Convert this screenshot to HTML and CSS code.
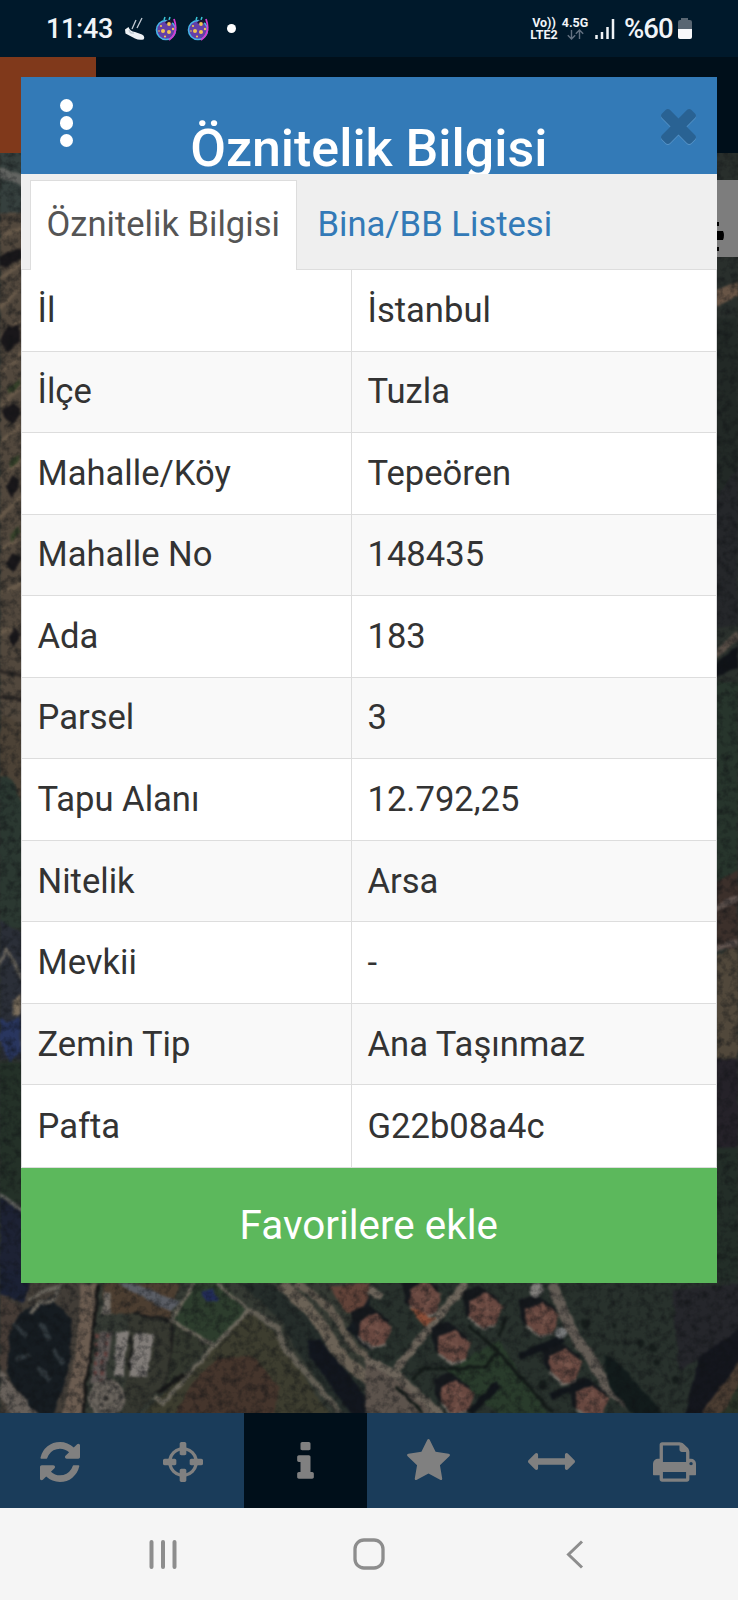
FILE: index.html
```html
<!DOCTYPE html>
<html lang="tr">
<head>
<meta charset="utf-8">
<title>Öznitelik Bilgisi</title>
<link rel="stylesheet" href="styles.css">
</head>
<body>
<div class="phone">
  <header class="status">
    <span class="clock">11:43</span>
    <svg class="shoe" width="21" height="24" viewBox="0 0 21 24"><path d="M1 12.500L4.500 10Q6 14.500 11 15L18 17.500Q21.500 19.500 19.500 22.500Q15 23.500 11 21.500L1.500 16.500Z" fill="#eef1f4"/><path d="M8 12L12 3M13 11L18 1M5 13Q6 17 10 16" stroke="#c3cbd4" stroke-width="1.300" fill="none"/></svg>
    <svg class="bug" width="24" height="28" viewBox="0 0 24 28"><use href="#beetle"/></svg>
    <svg class="bug second" width="24" height="28" viewBox="0 0 24 28"><use href="#beetle"/></svg>
    <i class="dot"></i>
    <span class="net lte"><span>Vo))</span><span>LTE2</span></span>
    <span class="net gen"><span>4.5G</span>
      <svg width="17" height="11" viewBox="0 0 17 11"><path d="M4.500 1V10M.8 6.200L4.500 10L8.200 6.200M12.500 10V1M8.800 4.800L12.500 1L16.200 4.800" fill="none" stroke="#627080" stroke-width="1.400"/></svg></span>
    <svg class="signal" width="20" height="22" viewBox="0 0 20 22"><path d="M1.500 17V21M7 14V21M12.500 9V21M18 1V21" stroke="#f0f3f6" stroke-width="2.500"/></svg>
    <span class="percent">%60</span>
    <svg class="battery" width="16" height="22" viewBox="0 0 16 22"><path d="M4 0H11V2H13Q15 2 15 4V11H1V4Q1 2 3 2H4Z" fill="#596672"/><path d="M1 11H15V19Q15 21 13 21H3Q1 21 1 19Z" fill="#f7f8fa"/></svg>
  </header>

  <main class="stage">
    <div class="appbar"><div class="brand"></div></div>
    <svg class="map" width="738" height="1260" viewBox="0 153 738 1260" preserveAspectRatio="none">
      <defs>
        <g id="beetle">
          <path d="M9 5L10 2M14 5L15 2" stroke="#39c5d8" stroke-width="1.500"/>
          <circle cx="11" cy="15" r="9.500" fill="#6340a8" stroke="#45b5e8" stroke-width="1.600"/>
          <path d="M19 4Q24 18 14 25" fill="none" stroke="#d63bd0" stroke-width="1.800"/>
          <path d="M10 8Q13 2 18 7L15 10Z" fill="#1c1430"/>
          <g fill="#f4c552"><circle cx="14" cy="9" r="1.900"/><circle cx="8" cy="16" r="2"/><circle cx="14" cy="17" r="2"/><circle cx="10" cy="21.500" r="1.100"/><circle cx="6" cy="11" r="1.100"/><circle cx="18" cy="14" r="1.200"/><circle cx="4" cy="16" r=".8"/></g>
        </g>
        <filter id="grain" x="0" y="0" width="100%" height="100%" color-interpolation-filters="sRGB"><feTurbulence type="fractalNoise" baseFrequency=".13" numOctaves="3" seed="8"/><feColorMatrix values="0 0 0 0 .06  0 0 0 0 .07  0 0 0 0 .08  1.200 0 0 0 -.5"/></filter>
        <filter id="rough" x="-5%" y="-5%" width="110%" height="110%" color-interpolation-filters="sRGB"><feTurbulence type="fractalNoise" baseFrequency=".09" numOctaves="2" seed="3" result="n"/><feDisplacementMap in="SourceGraphic" in2="n" scale="5" xChannelSelector="R" yChannelSelector="G"/><feGaussianBlur stdDeviation=".8"/></filter>
        <g id="house"><path d="M-58 -38L-8 -56L54 -12L54 18L10 56L-46 30Z" fill="#15181c" transform="translate(-14 -18)"/><path d="M-48 -26L0 -50L50 -10L30 44L-10 56L-48 18Z" fill="#684840"/><path d="M-48 -26L8 4L50 -10M8 4L-10 54M8 4L0 -48" stroke="#7b584e" stroke-width="5" fill="none"/><path d="M-50 22L-10 56L32 44" stroke="#79736c" stroke-width="6" fill="none"/></g>
      </defs>
      <rect y="153" width="738" height="1260" fill="#2b312d"/>
      <g filter="url(#rough)">
        <!-- west edge -->
        <g transform="translate(0 150) scale(.3333 .7334)">
          <rect width="70" height="90" fill="#36403e"/>
          <path d="M0 24L70 35V50L0 38Z" fill="#626461"/>
          <rect y="85" width="70" height="770" fill="#52483d"/>
          <path d="M0 120L70 104M0 175L70 150M0 215L70 185M0 258L70 230M0 305L70 275M0 350L70 320M0 398L70 375M0 445L70 425M0 500L70 470M0 545L70 525M0 605L70 590M0 660L70 646" stroke="#685a4a" stroke-width="6"/>
          <path d="M0 145L22 139L64 132V148L22 159L0 158ZM0 260L20 240L60 238V260L24 276ZM10 355L40 345L62 353L40 374L10 365ZM16 460L38 443L64 450L40 474ZM20 565L38 548L62 556L40 575ZM26 665L46 650L64 660L40 678Z" fill="#19171a"/>
          <path d="M26 328L60 316M30 430L60 420M30 530L60 515" stroke="#354129" stroke-width="9"/>
          <path d="M0 710L70 718M0 745L70 750" stroke="#2d2825" stroke-width="6"/>
          <path d="M0 770L70 785V910H0Z" fill="#4c4236"/>
          <path d="M0 855Q40 845 70 900V1060H0Z" fill="#2b3831"/>
          <path d="M0 1050L70 1070V1240H0Z" fill="#2b2f38"/>
          <path d="M0 1110L20 1090L64 1130M0 1215L64 1220" stroke="#67635c" stroke-width="8" fill="none"/>
          <path d="M0 1182L22 1190L62 1180V1230L30 1246L0 1215Z" fill="#29365f"/>
          <path d="M38 1160L62 1150V1180H38Z" fill="#7d705e"/>
          <rect y="1245" width="70" height="190" fill="#243128"/>
          <path d="M0 1428L70 1450V1568H0Z" fill="#1d2234"/>
          <path d="M0 1424L70 1447" stroke="#60615e" stroke-width="6"/>
        </g>
        <!-- east edge -->
        <g transform="translate(708 150) scale(.3333 .7334)">
          <rect width="90" height="500" fill="#292f2c"/>
          <path d="M20 192L90 180V197L20 216Z" fill="#685546"/>
          <path d="M20 230H90V480H20Z" fill="#222926"/>
          <path d="M20 480L90 430V650H20Z" fill="#25272a"/>
          <path d="M20 690L90 660" stroke="#5a5048" stroke-width="11"/>
          <path d="M20 702L90 676V705L20 720Z" fill="#101318"/>
          <rect y="725" x="20" width="70" height="270" fill="#27352c"/>
          <path d="M20 1000L90 980V1090H20Z" fill="#3c302b"/>
          <path d="M20 1035L90 1020M20 1090L90 1080" stroke="#625550" stroke-width="8"/>
          <path d="M20 1100L90 1085V1240H20Z" fill="#51483b"/>
          <path d="M20 1240H90V1440H20Z" fill="#252229"/>
          <path d="M20 1360H90V1568H20Z" fill="#232e28"/>
        </g>
        <!-- south-west -->
        <g transform="translate(0 1270) scale(.3333)">
          <rect width="1107" height="440" fill="#353a33"/>
          <path d="M0 0H260L230 440H0Z" fill="#423d37"/>
          <path d="M0 0H100L70 100L0 70Z" fill="#1b2134"/>
          <path d="M0 70L60 110L100 200L30 290L0 310Z" fill="#473d37"/>
          <path d="M60 130L150 80L215 150L210 280L160 440H110L20 310L30 180Z" fill="#161c21"/>
          <path d="M40 160L80 200M120 160L150 210M50 270L90 250M110 290L150 330M160 240L190 280" stroke="#30383d" stroke-width="14"/>
          <path d="M85 90L140 60L180 50L160 90L120 100L90 130" fill="none" stroke="#68645c" stroke-width="12"/>
          <path d="M0 300L120 440H40L0 380Z" fill="#67605a"/>
          <path d="M242 40H300L248 440H186Q238 250 242 40Z" fill="#6b5c50"/>
          <path d="M297 40L248 440" stroke="#141414" stroke-width="8"/>
          <path d="M306 40H540L510 150L400 130L310 130Z" fill="#4c3e31"/>
          <path d="M350 40H400L540 95L515 125Z" fill="#5a5d64"/>
          <path d="M312 65H332V130H306Z" fill="#77716a"/>
          <path d="M390 130L515 150L510 320L400 440H370L380 190Z" fill="#363830"/>
          <path d="M300 185H338L315 340H270Z" fill="#5d5654"/>
          <path d="M350 185H388L368 320H342ZM405 190H462L443 320H388Z" fill="#817c78"/>
          <path d="M395 195L390 300M400 130L510 155M515 150L510 310L480 370" stroke="#1b1b1b" stroke-width="6" fill="none"/>
          <path d="M290 190L285 330M322 190L302 340" stroke="#65403d" stroke-dasharray="12 16" stroke-width="10"/>
          <circle cx="320" cy="385" r="56" fill="#6a645d"/><circle cx="320" cy="385" r="43" fill="none" stroke="#4a4743" stroke-width="5"/><circle cx="320" cy="385" r="24" fill="none" stroke="#4a4743" stroke-width="5"/><circle cx="320" cy="385" r="7" fill="#302e2c"/>
          <path d="M585 40H670L745 120L640 220L520 150Z" fill="#2d3d2d"/>
          <path d="M520 155L635 225L470 380L510 310Z" fill="#33382e"/>
          <path d="M745 125L830 190L990 440H420L640 230Z" fill="#3d3d2f"/>
          <path d="M650 265L760 260L840 350L820 440H520L570 350Z" fill="#45352c"/>
          <path d="M580 40L515 150L640 225M650 40L745 118L640 230L490 400L460 380" stroke="#6b675c" stroke-width="11" fill="none"/>
          <path d="M745 118L835 175L850 230L1020 425" stroke="#69645a" stroke-width="18" fill="none"/>
          <path d="M470 370L555 310" stroke="#171717" stroke-width="14"/>
          <path d="M604 65L640 55L655 90L620 95Z" fill="#222c58"/>
          <path d="M720 40H820L920 130L1000 200L1107 330V440H1040L880 230L850 160Z" fill="#252d2a"/>
          <path d="M745 118L835 175L850 230L1020 425" stroke="#625e54" stroke-width="18" fill="none"/>
          <path d="M920 210L960 210L1107 390V440H1060L930 260Z" fill="#12161e"/>
          <path d="M840 40Q950 130 985 200T1120 340" stroke="#6b6256" stroke-width="36" fill="none"/>
          <path d="M890 40Q1000 110 1030 180T1120 265" stroke="#655d52" stroke-width="22" fill="none"/>
          <path d="M990 50L1107 40V120L1040 130Z" fill="#624339"/>
          <path d="M1107 80L1040 180L1107 240Z" fill="#151b20"/>
        </g>
        <!-- south-east housing -->
        <g transform="translate(369 1270) scale(.3333)">
          <rect y="30" width="1120" height="410" fill="#28312c"/>
          <path d="M390 210L540 440H400L230 300Z" fill="#293b2b"/>
          <path d="M-10 260L75 300L210 440H-10Z" fill="#5c534c"/>
          <path d="M290 40L80 300M-10 265L90 320L220 440M0 60L40 80" stroke="#6c645a" stroke-width="24" fill="none"/>
          <path d="M550 40Q600 180 640 230T710 350L840 440" stroke="#635c55" stroke-width="32" fill="none"/>
          <path d="M300 170L385 240L350 290L150 300M385 240L550 430M80 350L160 430M390 200L410 140M170 290L130 330" stroke="#141b18" stroke-width="10" fill="none"/>
          <use href="#house" x="170" y="85"/><use href="#house" x="350" y="120"/><use href="#house" x="520" y="145"/>
          <use href="#house" x="258" y="228"/><use href="#house" x="590" y="285"/><use href="#house" x="265" y="380"/>
          <use href="#house" x="670" y="395"/><use href="#house" x="20" y="180"/>
          <path d="M120 110L200 145L165 170Z" fill="#8a4e38"/>
          <path d="M450 260L580 205M545 380L665 335M300 430L390 340" stroke="#11151a" stroke-width="22"/>
          <circle cx="503" cy="60" r="21" fill="#817e7b"/><circle cx="576" cy="188" r="19" fill="#77797a"/>
          <path d="M700 250L760 290L890 440H800L720 350Z" fill="#121b1b"/>
          <path d="M910 60L1120 40V190L1000 260L930 300Z" fill="#25262b"/>
          <path d="M1120 170L990 260L945 440H1000L1120 290Z" fill="#14161d"/>
          <path d="M1120 260L990 440H1060L1120 350Z" fill="#4b3d32"/>
          <path d="M1120 330L1050 440H1120Z" fill="#293327"/>
          <g fill="#161d1b"><circle cx="815" cy="220" r="11"/><circle cx="850" cy="235" r="12"/><circle cx="918" cy="330" r="13"/><circle cx="650" cy="160" r="12"/><circle cx="738" cy="168" r="7"/><circle cx="865" cy="280" r="9"/><circle cx="520" cy="345" r="14"/></g>
        </g>
      </g>
      <rect y="153" width="738" height="1260" filter="url(#grain)"/>
      <rect x="690" y="180" width="48" height="77" fill="#7d7d7d"/>
      <path d="M717 222H719V226H717ZM717 231L723 231Q725 235 723 240H717ZM717 247H719V251H717Z" fill="#000"/>
    </svg>

    <section class="modal">
      <div class="modal-head">
        <div class="kebab"><i></i><i></i><i></i></div>
        <h1>Öznitelik Bilgisi</h1>
        <svg class="close" width="35" height="35" viewBox="110 366 1188 1188"><path d="M1298 1322q0 40-28 68l-136 136q-28 28-68 28t-68-28l-294-294-294 294q-28 28-68 28t-68-28l-136-136q-28-28-28-68t28-68l294-294-294-294q-28-28-28-68t28-68l136-136q28-28 68-28t68 28l294 294 294-294q28-28 68-28t68 28l136 136q28 28 28 68t-28 68l-294 294 294 294q28 28 28 68z"/></svg>
      </div>
      <nav class="tabs"><a class="tab active">Öznitelik Bilgisi</a><a class="tab">Bina/BB Listesi</a></nav>
      <dl class="rows">
        <div class="row"><dt>İl</dt><dd>İstanbul</dd></div>
        <div class="row"><dt>İlçe</dt><dd>Tuzla</dd></div>
        <div class="row"><dt>Mahalle/Köy</dt><dd>Tepeören</dd></div>
        <div class="row"><dt>Mahalle No</dt><dd>148435</dd></div>
        <div class="row"><dt>Ada</dt><dd>183</dd></div>
        <div class="row"><dt>Parsel</dt><dd>3</dd></div>
        <div class="row"><dt>Tapu Alanı</dt><dd>12.792,25</dd></div>
        <div class="row"><dt>Nitelik</dt><dd>Arsa</dd></div>
        <div class="row"><dt>Mevkii</dt><dd>-</dd></div>
        <div class="row"><dt>Zemin Tip</dt><dd>Ana Taşınmaz</dd></div>
        <div class="row"><dt>Pafta</dt><dd>G22b08a4c</dd></div>
      </dl>
      <button class="favorite">Favorilere ekle</button>
    </section>
  </main>

  <nav class="tools">
    <a><svg width="40" height="40" viewBox="0 0 1536 1536"><path d="M1511 928q0 5-1 7-64 268-268 434.500t-478 166.500q-146 0-282.500-55t-243.500-157l-129 129q-19 19-45 19t-45-19-19-45v-448q0-26 19-45t45-19h448q26 0 45 19t19 45-19 45l-137 137q71 66 161 102t187 36q134 0 250-65t186-179q11-17 53-117 8-23 30-23h192q13 0 22.500 9.500t9.500 22.500zm25-800v448q0 26-19 45t-45 19h-448q-26 0-45-19t-19-45 19-45l138-138q-148-137-349-137-134 0-250 65t-186 179q-11 17-53 117-8 23-30 23h-199q-13 0-22.500-9.500t-9.500-22.500v-7q65-268 270-434.500t480-166.500q146 0 284 55.500t245 156.500l130-129q19-19 45-19t45 19 19 45z"/></svg></a>
    <a><svg width="40" height="40" viewBox="0 0 1536 1536"><path d="M1197 896h-109q-26 0-45-19t-19-45v-128q0-26 19-45t45-19h109q-32-108-112.500-188.500t-188.500-112.500v109q0 26-19 45t-45 19h-128q-26 0-45-19t-19-45v-109q-108 32-188.500 112.500t-112.500 188.500h109q26 0 45 19t19 45v128q0 26-19 45t-45 19h-109q32 108 112.500 188.500t188.500 112.500v-109q0-26 19-45t45-19h128q26 0 45 19t19 45v109q108-32 188.500-112.500t112.500-188.500zm339-192v128q0 26-19 45t-45 19h-143q-37 161-154.500 278.500t-278.500 154.500v143q0 26-19 45t-45 19h-128q-26 0-45-19t-19-45v-143q-161-37-278.500-154.500t-154.500-278.500h-143q-26 0-45-19t-19-45v-128q0-26 19-45t45-19h143q37-161 154.500-278.500t278.500-154.500v-143q0-26 19-45t45-19h128q26 0 45 19t19 45v143q161 37 278.500 154.500t154.500 278.500h143q26 0 45 19t19 45z"/></svg></a>
    <a class="selected"><svg width="17" height="40" viewBox="0 128 640 1536"><path d="M640 1344v128q0 26-19 45t-45 19h-512q-26 0-45-19t-19-45v-128q0-26 19-45t45-19h64v-384h-64q-26 0-45-19t-19-45v-128q0-26 19-45t45-19h384q26 0 45 19t19 45v576h64q26 0 45 19t19 45zm-128-1152v192q0 26-19 45t-45 19h-256q-26 0-45-19t-19-45v-192q0-26 19-45t45-19h256q26 0 45 19t19 45z"/></svg></a>
    <a><svg class="star" width="43" height="41" viewBox="0 32 1664 1587"><path d="M1664 647q0 22-26 48l-363 354 86 500q1 7 1 20 0 21-10.500 35.500t-30.500 14.500q-19 0-40-12l-449-236-449 236q-22 12-40 12-21 0-31.500-14.500t-10.500-35.500q0-6 2-20l86-500-364-354q-25-27-25-48 0-37 56-46l502-73 225-455q19-41 49-41t49 41l225 455 502 73q56 9 56 46z"/></svg></a>
    <a><svg width="47" height="17" viewBox="0 -64 1792 640"><path d="M1792 256q0 26-19 45l-256 256q-19 19-45 19t-45-19-19-45v-128h-1024v128q0 26-19 45t-45 19-45-19l-256-256q-19-19-19-45t19-45l256-256q19-19 45-19t45 19 19 45v128h1024v-128q0-26 19-45t45-19 45 19l256 256q19 19 19 45z"/></svg></a>
    <a><svg width="43" height="40" viewBox="0 0 1664 1536"><path d="M384 1408h896v-256h-896v256zm0-640h896v-384h-160q-40 0-68-28t-28-68v-160h-640v640zm1152 64q0-26-19-45t-45-19-45 19-19 45 19 45 45 19 45-19 19-45zm128 0v416q0 13-9.500 22.500t-22.500 9.500h-224v160q0 40-28 68t-68 28h-960q-40 0-68-28t-28-68v-160h-224q-13 0-22.500-9.500t-9.500-22.500v-416q0-79 56.500-135.500t135.500-56.500h64v-544q0-40 28-68t68-28h672q40 0 88 20t76 48l152 152q28 28 48 76t20 88v256h64q79 0 135.500 56.500t56.500 135.500z"/></svg></a>
  </nav>

  <nav class="system">
    <svg width="28" height="29" viewBox="0 0 28 29"><path d="M2.500 2V27M14 2V27M25.500 2V27" stroke-width="4" stroke-linecap="round"/></svg>
    <svg width="32" height="32" viewBox="0 0 32 32"><rect x="2" y="2" width="28" height="28" rx="9" stroke-width="3.300"/></svg>
    <svg width="18" height="29" viewBox="0 0 18 29"><path d="M16 1.500L2.500 14.500L16 27.500" stroke-width="3"/></svg>
  </nav>
</div>
</body>
</html>
```
FILE: styles.css
```css
* { box-sizing: border-box; }
body { margin: 0; font-family: Roboto, "Liberation Sans", sans-serif; }
svg { display: block; flex: none; }
.phone { display: flex; flex-direction: column; width: 738px; height: 1600px; overflow: hidden; }

.status { display: flex; align-items: center; height: 57px; padding: 0 45px 0 46px; background: #00192b; color: #f1f4f8; }
.clock { width: 66px; font-size: 27px; font-weight: 500; line-height: 56px; letter-spacing: -.3px; }
.shoe { margin-left: 12px; }
.bug { margin: 0 0 0 10px; }
.bug.second { margin-left: 8px; }
.dot { width: 9px; height: 9px; margin: 0 auto 0 16px; border-radius: 50%; background: #fff; }
.net { display: flex; flex-direction: column; align-items: center; font-size: 12.500px; font-weight: 700; line-height: 12px; }
.lte { width: 28px; }
.gen { width: 26px; margin-left: 4px; }
.signal { margin-left: 7px; }
.percent { width: 51px; margin-left: 9px; font-size: 27.500px; font-weight: 500; letter-spacing: -.9px; }
.battery { margin-left: 2px; }

.stage { display: grid; grid-template-rows: 96px 1260px; grid-template-columns: 738px; height: 1356px; }
.appbar { grid-area: 1 / 1; background: #000f1a; }
.brand { width: 96px; height: 96px; background: #80391b; }
.map { grid-area: 2 / 1; }
.modal { grid-area: 1 / 1 / 3 / 2; display: flex; flex-direction: column; width: 696.500px; height: 1206px; margin: 20px 0 0 20.500px; z-index: 1; background: #fff; }
.modal-head { display: grid; grid-template-columns: 60px 1fr 60px; justify-items: center; height: 97px; padding: 0 15px; background: #337ab7; color: #fff; }
.kebab { display: flex; flex-direction: column; gap: 4px; padding: 21.500px 0 0 1.500px; }
.kebab i { width: 13.500px; height: 13.500px; border-radius: 50%; background: #fff; }
.modal-head h1 { margin: 42px 0 0; font-size: 51.900px; font-weight: 500; line-height: 60px; white-space: nowrap; }
.close { margin: 31.500px 0 0 13px; fill: #296293; filter: drop-shadow(0 1px 0 #5794c8); }

.tabs { display: flex; height: 96px; padding: 6px 0 0 9px; background: #efefef; border-bottom: 1px solid #ddd; z-index: 1; }
.tab { height: 91px; padding: 0 17px; font-size: 34.600px; line-height: 86px; color: #337ab7; border: 1px solid transparent; white-space: nowrap; }
.tab + .tab { margin-left: 3px; }
.tab.active { width: 267px; height: 90px; padding-left: 16px; color: #555; background: #fff; border-color: #ddd; border-bottom: 0; }

.rows { display: grid; grid-template-rows: repeat(11, 1fr); height: 898px; margin: 0; border: 1px solid #ddd; border-top: 0; font-size: 34.600px; color: #333; }
.row { display: grid; grid-template-columns: 330px 1fr; border-bottom: 1px solid #ddd; }
.row:last-child { border-bottom: 0; }
.row:nth-child(even) { background: #f9f9f9; }
.row dt, .row dd { display: flex; align-items: center; margin: 0; padding: 0 0 1px 16px; }
.row dt { border-right: 1px solid #ddd; }

.favorite { height: 115px; padding: 0; border: 0; background: #5cb85c; color: #fff; font-family: inherit; font-size: 40.400px; }

.tools { display: grid; grid-template-columns: repeat(6, 123px) 4px; height: 95px; margin-left: -2px; background: #1a3c5a; }
.tools a { display: flex; align-items: center; justify-content: center; padding-top: 2px; }
.tools svg { fill: #808080; }
.tools .star { margin-top: -4px; }
.tools .selected { background: #000f1a; }

.system { display: grid; grid-template-columns: 206px 206px 206px; justify-content: center; justify-items: center; align-items: center; height: 92px; background: #f5f5f5; }
.system svg { fill: none; stroke: #8d8d8d; }
```
